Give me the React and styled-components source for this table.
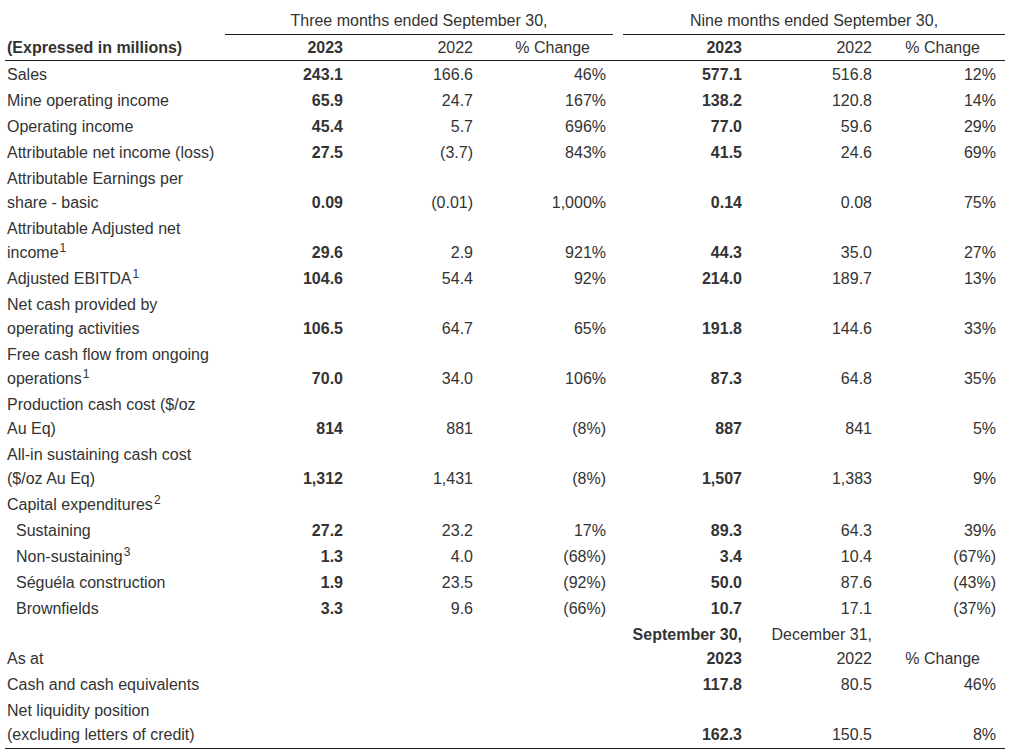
import React from "react";
import styled, { createGlobalStyle } from "styled-components";

const GlobalStyle = createGlobalStyle`
  body {
    margin: 0;
    background: #ffffff;
    font-family: "Liberation Sans", Arial, sans-serif;
    font-size: 16px;
    color: #333333;
  }
`;

const COLUMNS = "220px 125px 130px 133px 10px 126px 130px 126px";

const Wrapper = styled.div`
  padding: 8px 0 0 5px;
  width: 1000px;
`;

const Row = styled.div`
  display: grid;
  grid-template-columns: ${COLUMNS};
  align-items: end;
  padding-bottom: ${(props) => (props.$rule ? "1px" : "0")};
  border-bottom: ${(props) => (props.$rule ? "1px solid #1a1a1a" : "none")};
`;

const GroupHead = styled.div`
  grid-column: ${(props) => props.$col} / span 3;
  text-align: center;
  line-height: 24px;
  padding: 1px 0;
  border-bottom: 1px solid #1a1a1a;
  white-space: nowrap;
`;

const Cell = styled.div`
  line-height: 24px;
  padding: ${(props) => (props.$head ? "1px 0 0" : "2px 0 0")};
  padding-left: ${(props) => (props.$indent ? "11px" : props.$label ? "2px" : "0")};
  padding-right: ${(props) => (props.$label ? "0" : `${props.$pr || 7}px`)};
  text-align: ${(props) => (props.$label ? "left" : "right")};
  font-weight: ${(props) => (props.$bold ? 700 : 400)};
  white-space: nowrap;
`;

const Spacer = styled.div``;

const Sup = styled.sup`
  font-size: 12px;
  line-height: 0;
  vertical-align: 6px;
  margin-left: 1px;
`;

const lines = (arr) =>
  arr.map((part, i) => (
    <React.Fragment key={i}>
      {i > 0 && <br />}
      {part}
    </React.Fragment>
  ));

const rows = [
  { label: ["Sales"], q: ["243.1", "166.6", "46%"], n: ["577.1", "516.8", "12%"] },
  { label: ["Mine operating income"], q: ["65.9", "24.7", "167%"], n: ["138.2", "120.8", "14%"] },
  { label: ["Operating income"], q: ["45.4", "5.7", "696%"], n: ["77.0", "59.6", "29%"] },
  { label: ["Attributable net income (loss)"], q: ["27.5", "(3.7)", "843%"], n: ["41.5", "24.6", "69%"] },
  {
    label: ["Attributable Earnings per", "share - basic"],
    q: ["0.09", "(0.01)", "1,000%"],
    n: ["0.14", "0.08", "75%"],
  },
  {
    label: [
      "Attributable Adjusted net",
      <>
        income<Sup>1</Sup>
      </>,
    ],
    q: ["29.6", "2.9", "921%"],
    n: ["44.3", "35.0", "27%"],
  },
  {
    label: [
      <>
        Adjusted EBITDA<Sup>1</Sup>
      </>,
    ],
    q: ["104.6", "54.4", "92%"],
    n: ["214.0", "189.7", "13%"],
  },
  {
    label: ["Net cash provided by", "operating activities"],
    q: ["106.5", "64.7", "65%"],
    n: ["191.8", "144.6", "33%"],
  },
  {
    label: [
      "Free cash flow from ongoing",
      <>
        operations<Sup>1</Sup>
      </>,
    ],
    q: ["70.0", "34.0", "106%"],
    n: ["87.3", "64.8", "35%"],
  },
  {
    label: ["Production cash cost ($/oz", "Au Eq)"],
    q: ["814", "881", "(8%)"],
    n: ["887", "841", "5%"],
  },
  {
    label: ["All-in sustaining cash cost", "($/oz Au Eq)"],
    q: ["1,312", "1,431", "(8%)"],
    n: ["1,507", "1,383", "9%"],
  },
  {
    label: [
      <>
        Capital expenditures<Sup>2</Sup>
      </>,
    ],
    q: ["", "", ""],
    n: ["", "", ""],
  },
  { label: ["Sustaining"], indent: true, q: ["27.2", "23.2", "17%"], n: ["89.3", "64.3", "39%"] },
  {
    label: [
      <>
        Non-sustaining<Sup>3</Sup>
      </>,
    ],
    indent: true,
    q: ["1.3", "4.0", "(68%)"],
    n: ["3.4", "10.4", "(67%)"],
  },
  { label: ["Séguéla construction"], indent: true, q: ["1.9", "23.5", "(92%)"], n: ["50.0", "87.6", "(43%)"] },
  { label: ["Brownfields"], indent: true, q: ["3.3", "9.6", "(66%)"], n: ["10.7", "17.1", "(37%)"] },
];

const balanceRows = [
  { label: ["Cash and cash equivalents"], n: ["117.8", "80.5", "46%"] },
  {
    label: ["Net liquidity position", "(excluding letters of credit)"],
    n: ["162.3", "150.5", "8%"],
    rule: true,
  },
];

function DataRow({ row }) {
  const q = row.q || ["", "", ""];
  return (
    <Row $rule={row.rule}>
      <Cell $label $indent={row.indent}>
        {lines(row.label)}
      </Cell>
      <Cell $bold>{q[0]}</Cell>
      <Cell>{q[1]}</Cell>
      <Cell>{q[2]}</Cell>
      <Spacer />
      <Cell $bold>{row.n[0]}</Cell>
      <Cell>{row.n[1]}</Cell>
      <Cell $pr={9}>{row.n[2]}</Cell>
    </Row>
  );
}

export default function App() {
  return (
    <>
      <GlobalStyle />
      <Wrapper>
        <Row>
          <Spacer />
          <GroupHead $col={2}>Three months ended September 30,</GroupHead>
          <Spacer />
          <GroupHead $col={6}>Nine months ended September 30,</GroupHead>
        </Row>
        <Row $head>
          <Cell $label $head $bold>
            (Expressed in millions)
          </Cell>
          <Cell $head $bold>
            2023
          </Cell>
          <Cell $head>2022</Cell>
          <Cell $head $pr={23}>
            % Change
          </Cell>
          <Spacer />
          <Cell $head $bold>
            2023
          </Cell>
          <Cell $head>2022</Cell>
          <Cell $head $pr={25}>
            % Change
          </Cell>
        </Row>
        <HeadRule />
        {rows.map((row, idx) => (
          <DataRow key={idx} row={row} />
        ))}
        <Row>
          <Cell $label>As at</Cell>
          <Cell />
          <Cell />
          <Cell />
          <Spacer />
          <Cell $bold>{lines(["September 30,", "2023"])}</Cell>
          <Cell>{lines(["December 31,", "2022"])}</Cell>
          <Cell $pr={25}>% Change</Cell>
        </Row>
        {balanceRows.map((row, idx) => (
          <DataRow key={idx} row={row} />
        ))}
      </Wrapper>
    </>
  );
}

const HeadRule = styled.div`
  border-bottom: 1px solid #1a1a1a;
`;
